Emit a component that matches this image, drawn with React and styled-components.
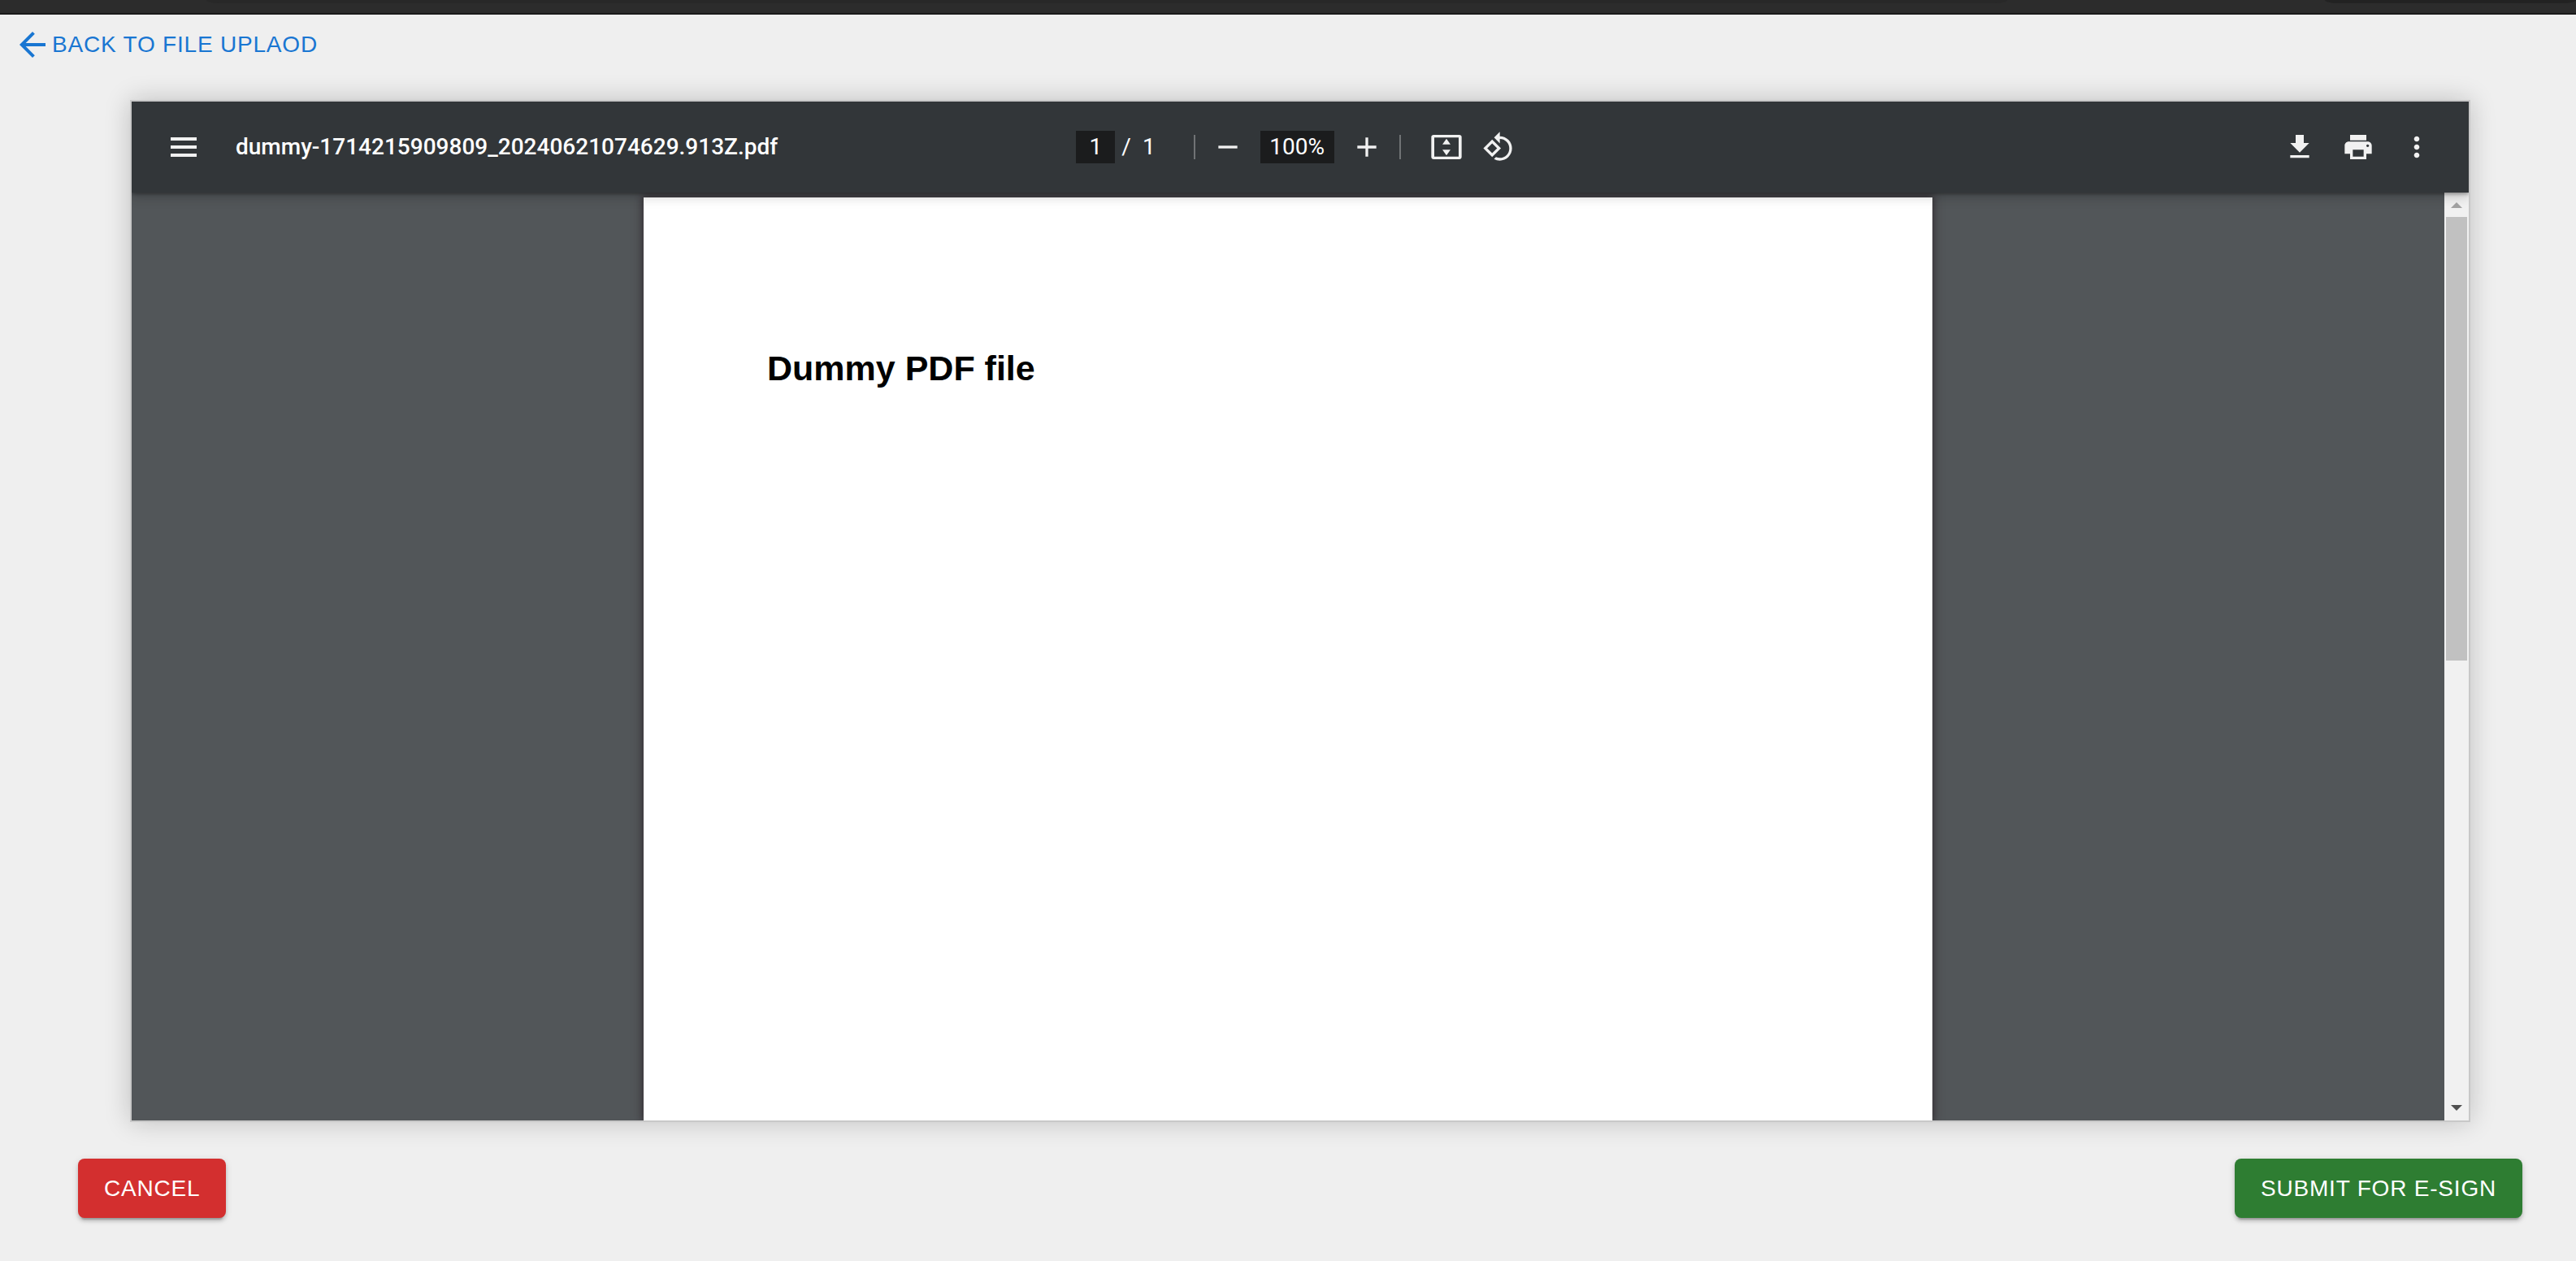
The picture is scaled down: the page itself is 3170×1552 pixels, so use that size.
import React from "react";
import styled, { createGlobalStyle } from "styled-components";

const GlobalStyle = createGlobalStyle`
  *, *::before, *::after { box-sizing: border-box; }
  body { margin: 0; background: #efefef; }
`;

const Page = styled.div`
  display: flex;
  flex-direction: column;
  min-height: 100vh;
  background: #efefef;
  font-family: "Liberation Sans", Arial, sans-serif;
`;

const BrowserEdge = styled.div`
  display: flex;
  justify-content: space-between;
  height: 18px;
  padding: 0 0 0 254px;
  background: #2c2c2c;
  border-bottom: 2px solid #1a1a1a;
`;

const EdgeField = styled.div`
  width: ${(p) => p.$width};
  height: 4px;
  border-radius: 0 0 16px 16px / 0 0 4px 4px;
  background: ${(p) => p.$color};
`;

const TopRow = styled.header`
  display: flex;
  padding: 12px 16px 44px;
`;

const BackButton = styled.button`
  display: flex;
  align-items: center;
  padding: 0;
  border: 0;
  background: none;
  color: #1976d2;
  font: 400 28px/49px "Liberation Sans", Arial, sans-serif;
  letter-spacing: 0.02857em;
  text-transform: uppercase;
  cursor: pointer;
`;

const Viewer = styled.main`
  flex: 1;
  display: flex;
  flex-direction: column;
  margin: 0 130px 0 160px;
  border: 2px solid #c8c8c8;
  box-shadow: 0 0 30px rgba(0, 0, 0, 0.2);
  background: #525659;
`;

const Toolbar = styled.div`
  position: relative;
  z-index: 1;
  display: flex;
  align-items: center;
  height: 112px;
  padding: 0 32px;
  background: #323639;
  box-shadow: 0 8px 16px rgba(0, 0, 0, 0.06), 0 2px 4px rgba(0, 0, 0, 0.3),
    0 4px 12px rgba(0, 0, 0, 0.15);
  clip-path: inset(0 0 -24px 0);
  color: #fff;
  font: 400 28px/40px Roboto, sans-serif;
`;

const ToolbarStart = styled.div`
  flex: 1;
  display: flex;
  align-items: center;
  gap: 32px;
`;

const ToolbarCenter = styled.div`
  display: flex;
  align-items: center;
`;

const ToolbarEnd = styled.div`
  flex: 1;
  display: flex;
  justify-content: flex-end;
  gap: 8px;
`;

const FileName = styled.span`
  font-weight: 500;
  white-space: nowrap;
`;

const ToolButton = styled.button`
  display: grid;
  place-items: center;
  width: 64px;
  height: 64px;
  padding: 0;
  border: 0;
  background: none;
  color: #f1f1f1;
  cursor: pointer;

  svg { display: block; fill: currentColor; }
`;

const ToolField = styled.input`
  width: ${(p) => p.$width}px;
  height: 40px;
  margin: 0 8px 0 ${(p) => p.$before}px;
  padding: 0;
  border: 0;
  background: #1b1c1d;
  color: #fff;
  font: inherit;
  text-align: center;
`;

const PageCount = styled.span`
  display: flex;
  gap: 14px;
  margin-right: 47px;
`;

const Divider = styled.span`
  width: 2px;
  height: 30px;
  margin: 0 ${(p) => p.$after}px 0 ${(p) => p.$before}px;
  background: #707375;
`;

const Content = styled.div`
  flex: 1;
  display: flex;
`;

const Canvas = styled.div`
  flex: 1;
  display: flex;
  justify-content: center;
  overflow: hidden;
  padding-top: 6px;
`;

const Sheet = styled.article`
  width: 1586px;
  padding: 185px 152px;
  background: #fff;
  box-shadow: 0 0 10px 2px rgba(40, 30, 35, 0.7);
`;

const SheetTitle = styled.h1`
  margin: 0;
  color: #000;
  font: 700 43px/50px "Liberation Sans", Arial, sans-serif;
`;

const Scrollbar = styled.div`
  display: flex;
  flex-direction: column;
  align-items: center;
  width: 30px;
  padding: 12px 0;
  background: #f1f1f1;
`;

const ScrollArrow = styled.svg`
  display: block;
  width: 14px;
  height: 7px;
  fill: ${(p) => p.$color};
`;

const ScrollTrack = styled.div`
  flex: 1;
  width: 26px;
  margin: 11px 0;
`;

const ScrollThumb = styled.div`
  height: 50.5%;
  background: #c1c1c1;
`;

const Actions = styled.footer`
  display: flex;
  justify-content: space-between;
  padding: 45px 66px 53px 96px;
`;

const ActionButton = styled.button`
  padding: 12px 32px;
  border: 0;
  border-radius: 8px;
  background: ${(p) => p.$color};
  color: #fff;
  box-shadow: 0 6px 2px -4px rgba(0, 0, 0, 0.2), 0 4px 4px rgba(0, 0, 0, 0.14),
    0 2px 10px rgba(0, 0, 0, 0.12);
  font: 400 28px/49px "Liberation Sans", Arial, sans-serif;
  letter-spacing: 0.02857em;
  text-transform: uppercase;
  cursor: pointer;
`;

const ICONS = {
  plus: "M19 13h-6v6h-2v-6H5v-2h6V5h2v6h6v2z",
  minus: "M19 13H5v-2h14v2z",
  rotate:
    "M7.34 6.41L.86 12.9l6.49 6.48 6.49-6.48-6.5-6.49zM3.69 12.9l3.66-3.66L11 12.9l-3.66 3.66-3.65-3.66zm15.67-6.26C17.61 4.88 15.3 4 13 4V.76L8.76 5 13 9.24V6c1.79 0 3.58.68 4.95 2.05 2.73 2.73 2.73 7.17 0 9.9C16.58 19.32 14.79 20 13 20c-.97 0-1.94-.21-2.84-.61l-1.49 1.49C10.02 21.62 11.51 22 13 22c2.3 0 4.61-.88 6.36-2.64 3.52-3.51 3.52-9.21 0-12.72z",
  fit: "M21.5 3h-19C1.5 3 .8 3.7.8 4.6v14.8c0 .9.7 1.6 1.7 1.6h19c1 0 1.7-.7 1.7-1.6V4.6c0-.9-.7-1.6-1.7-1.6zM21 19H3V5h18v14zM9 10.1h6L12 5.8zM9 13.9h6l-3 4.3z",
  download: "M19 9h-4V3H9v6H5l7 7 7-7zM5 18v2h14v-2H5z",
  print:
    "M19 8H5c-1.66 0-3 1.34-3 3v6h4v4h12v-4h4v-6c0-1.66-1.34-3-3-3zm-3 11H8v-5h8v5zm3-7c-.55 0-1-.45-1-1s.45-1 1-1 1 .45 1 1-.45 1-1 1zm-1-9H6v4h12V3z",
  more: "M12 8c1.1 0 2-.9 2-2s-.9-2-2-2-2 .9-2 2 .9 2 2 2zm0 2c-1.1 0-2 .9-2 2s.9 2 2 2 2-.9 2-2-.9-2-2-2zm0 6c-1.1 0-2 .9-2 2s.9 2 2 2 2-.9 2-2-.9-2-2-2z",
};

function Tool({ icon, label }) {
  return (
    <ToolButton type="button" aria-label={label}>
      <svg width="40" height="40" viewBox="0 0 24 24" aria-hidden="true">
        <path d={ICONS[icon]} />
      </svg>
    </ToolButton>
  );
}

export default function App() {
  return (
    <>
      <GlobalStyle />
      <Page>
        <BrowserEdge>
          <EdgeField $width="76%" $color="#282828" />
          <EdgeField $width="10.6%" $color="#222222" />
        </BrowserEdge>
        <TopRow>
          <BackButton type="button">
            <svg width="48" height="48" viewBox="0 0 24 24" fill="currentColor" aria-hidden="true">
              <path d="M20 11H7.83l5.59-5.59L12 4l-8 8 8 8 1.41-1.41L7.83 13H20v-2z" />
            </svg>
            Back to file uplaod
          </BackButton>
        </TopRow>
        <Viewer>
          <Toolbar>
            <ToolbarStart>
              <ToolButton type="button" aria-label="Menu">
                <svg width="32" height="24" viewBox="0 0 32 24" aria-hidden="true">
                  <path d="M0 0h32v4H0zM0 10h32v4H0zM0 20h32v4H0z" />
                </svg>
              </ToolButton>
              <FileName>dummy-1714215909809_20240621074629.913Z.pdf</FileName>
            </ToolbarStart>
            <ToolbarCenter>
              <ToolField $width={48} $before={0} aria-label="Page number" defaultValue="1" />
              <PageCount>
                <span>/</span>
                <span>1</span>
              </PageCount>
              <Divider $before={0} $after={8} />
              <Tool icon="minus" label="Zoom out" />
              <ToolField $width={91} $before={8} aria-label="Zoom level" defaultValue="100%" />
              <Tool icon="plus" label="Zoom in" />
              <Divider $before={8} $after={24} />
              <Tool icon="fit" label="Fit to page" />
              <Tool icon="rotate" label="Rotate counterclockwise" />
            </ToolbarCenter>
            <ToolbarEnd>
              <Tool icon="download" label="Download" />
              <Tool icon="print" label="Print" />
              <Tool icon="more" label="More actions" />
            </ToolbarEnd>
          </Toolbar>
          <Content>
            <Canvas>
              <Sheet>
                <SheetTitle>Dummy PDF file</SheetTitle>
              </Sheet>
            </Canvas>
            <Scrollbar>
              <ScrollArrow $color="#a3a3a3" viewBox="0 0 14 7" aria-hidden="true">
                <path d="M0 7L7 0l7 7z" />
              </ScrollArrow>
              <ScrollTrack>
                <ScrollThumb />
              </ScrollTrack>
              <ScrollArrow $color="#505050" viewBox="0 0 14 7" aria-hidden="true">
                <path d="M0 0h14L7 7z" />
              </ScrollArrow>
            </Scrollbar>
          </Content>
        </Viewer>
        <Actions>
          <ActionButton type="button" $color="#d32f2f">Cancel</ActionButton>
          <ActionButton type="button" $color="#2e7d32">Submit for e-sign</ActionButton>
        </Actions>
      </Page>
    </>
  );
}
